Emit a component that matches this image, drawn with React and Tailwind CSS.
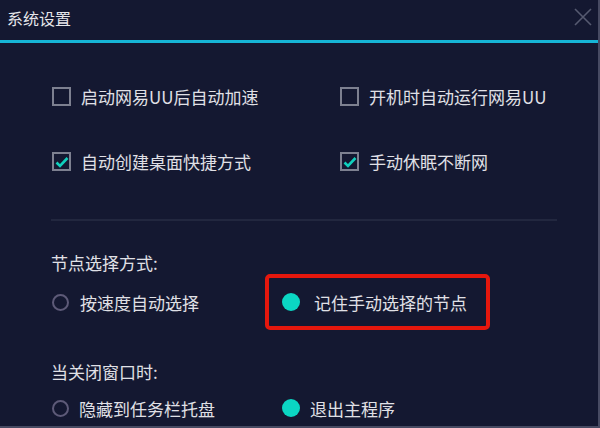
import React from 'react';

const font = { fontFamily: '"Noto Sans CJK SC", "Noto Sans", sans-serif' };

const CheckBox = ({ checked, label }) => (
  <div className="flex items-center">
    <div className="w-[19px] h-[19px] border-2 border-[#7d8090] flex items-center justify-center">
      {checked && (
        <svg width="14" height="12" viewBox="0 0 14 12">
          <path d="M1.5 6.5 L5 10 L12.5 2" fill="none" stroke="#10d0bd" strokeWidth="2.6" />
        </svg>
      )}
    </div>
    <span className="ml-[10px] text-[17px] leading-none text-[#e0e0e6]">{label}</span>
  </div>
);

const Radio = ({ on, label, gap = 'ml-[11px]' }) => (
  <div className="flex items-center">
    {on ? (
      <div className="w-[18px] h-[18px] rounded-full bg-[#0bd6c3]" />
    ) : (
      <div className="w-[17px] h-[17px] rounded-full border-2 border-[#5d5a78]" />
    )}
    <span className={`${gap} text-[17px] leading-none text-[#e0e0e6]`}>{label}</span>
  </div>
);

export default function App() {
  return (
    <div className="w-[600px] h-[428px] bg-[#141831] border-r-2 border-b-2 border-[#474a62] flex flex-col" style={font}>
      <div className="h-[40px] flex items-center justify-between pl-[7px] pr-[6px]">
        <span className="text-[16px] text-[#e6e6ea] leading-none -mt-[4px]">系统设置</span>
        <svg width="18" height="18" viewBox="0 0 18 18" className="-mt-[6px]">
          <path d="M1 1 L17 17 M17 1 L1 17" stroke="#565a70" strokeWidth="1.6" />
        </svg>
      </div>
      <div className="h-[3px] bg-[#16b5d6]" />
      <div className="pl-[52px] pr-[41px]">
        <div className="grid grid-cols-[288px_1fr] mt-[44px]">
          <CheckBox label="启动网易UU后自动加速" />
          <CheckBox label="开机时自动运行网易UU" />
        </div>
        <div className="grid grid-cols-[288px_1fr] mt-[46px]">
          <CheckBox checked label="自动创建桌面快捷方式" />
          <CheckBox checked label="手动休眠不断网" />
        </div>
        <div className="h-[2px] bg-[#22273f] mt-[48px] -ml-[1px]" />
        <div className="mt-[33px] text-[17px] leading-none text-[#e0e0e6] -ml-[1px]">节点选择方式:</div>
        <div className="flex items-center mt-[3px]">
          <div className="w-[213px]">
            <Radio label="按速度自动选择" />
          </div>
          <div className="h-[56px] w-[225px] border-[4px] border-[#e5170d] rounded-[5px] flex items-center pl-[13px]">
            <Radio on label="记住手动选择的节点" gap="ml-[14px]" />
          </div>
        </div>
        <div className="mt-[33px] text-[17px] leading-none text-[#e0e0e6] -ml-[1px]">当关闭窗口时:</div>
        <div className="flex items-center mt-[19px]">
          <div className="w-[230px]">
            <Radio label="隐藏到任务栏托盘" gap="ml-[10px]" />
          </div>
          <Radio on label="退出主程序" gap="ml-[10px]" />
        </div>
      </div>
    </div>
  );
}
